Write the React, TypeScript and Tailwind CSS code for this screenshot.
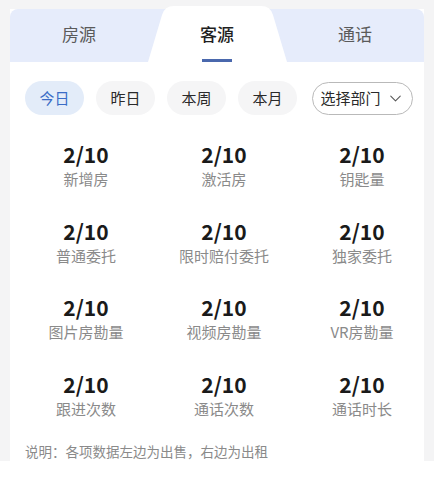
import { ChevronDown } from "lucide-react";

const tabs = ["房源", "客源", "通话"];
const ranges = ["今日", "昨日", "本周", "本月"];
const stats = [
  "新增房",
  "激活房",
  "钥匙量",
  "普通委托",
  "限时赔付委托",
  "独家委托",
  "图片房勘量",
  "视频房勘量",
  "VR房勘量",
  "跟进次数",
  "通话次数",
  "通话时长",
];

function ActiveTabShape() {
  return (
    <svg
      className="absolute left-0 top-[-3px] h-[56px] w-[139px]"
      viewBox="0 0 139 56"
      preserveAspectRatio="none"
    >
      <path
        d="M0,56 L14,9 Q16.5,0 26,0 L113,0 Q122.5,0 125,9 L139,56 Z"
        fill="#ffffff"
      />
    </svg>
  );
}

export default function App() {
  const active = 1;
  return (
    <div
      className="min-h-[482px] bg-white"
      style={{ fontFamily: '"Noto Sans CJK SC", "Noto Sans", sans-serif' }}
    >
      <div className="bg-[#f4f4f5] px-[10px] pt-[9px]">
        <div className="bg-white">
          {/* tabs */}
          <div className="flex h-[53px] rounded-t-[8px] bg-[#e6ecfb]">
            {tabs.map((t, i) => (
              <div
                key={t}
                className="relative flex w-[138px] items-center justify-center pb-[4px]"
              >
                {i === active && <ActiveTabShape />}
                <span
                  className={`relative text-[17px] ${
                    i === active ? "font-medium text-[#1f1f1f]" : "text-[#5a5a5a]"
                  }`}
                >
                  {t}
                </span>
                {i === active && (
                  <span className="absolute bottom-0 left-1/2 h-[3px] w-[30px] -translate-x-1/2 bg-[#4a68ad]" />
                )}
              </div>
            ))}
          </div>

          {/* filters */}
          <div className="flex items-center pl-[15px] pt-[19px]">
            <div className="flex gap-[12px]">
              {ranges.map((r, i) => (
                <button
                  key={r}
                  className={`flex h-[34px] w-[59px] items-center justify-center rounded-full text-[15px] ${
                    i === 0
                      ? "bg-[#e3ecf9] text-[#3a6cc6]"
                      : "bg-[#f5f5f6] text-[#2a2a2a]"
                  }`}
                >
                  {r}
                </button>
              ))}
            </div>
            <button className="ml-[15px] flex h-[33px] w-[101px] items-center justify-center gap-[5px] rounded-full border border-[#b9b9b9] text-[15px] text-[#2a2a2a]">
              选择部门
              <ChevronDown className="h-[19px] w-[19px] text-[#555]" strokeWidth={1.3} />
            </button>
          </div>

          {/* stats */}
          <div className="grid grid-cols-[138px_138px_138px] gap-y-[27.5px] pl-[7px] pt-[26px]">
            {stats.map((s) => (
              <div key={s} className="flex flex-col items-center">
                <span className="text-[21px] font-bold leading-[26px] text-[#1a1a1a]">
                  2/10
                </span>
                <span className="text-[15px] leading-[23px] text-[#8a8a8a]">
                  {s}
                </span>
              </div>
            ))}
          </div>

          <div className="pl-[15px] pt-[21px] text-[13.5px] leading-[20px] text-[#8a8a8a]">
            说明：各项数据左边为出售，右边为出租
          </div>
        </div>
      </div>
    </div>
  );
}
